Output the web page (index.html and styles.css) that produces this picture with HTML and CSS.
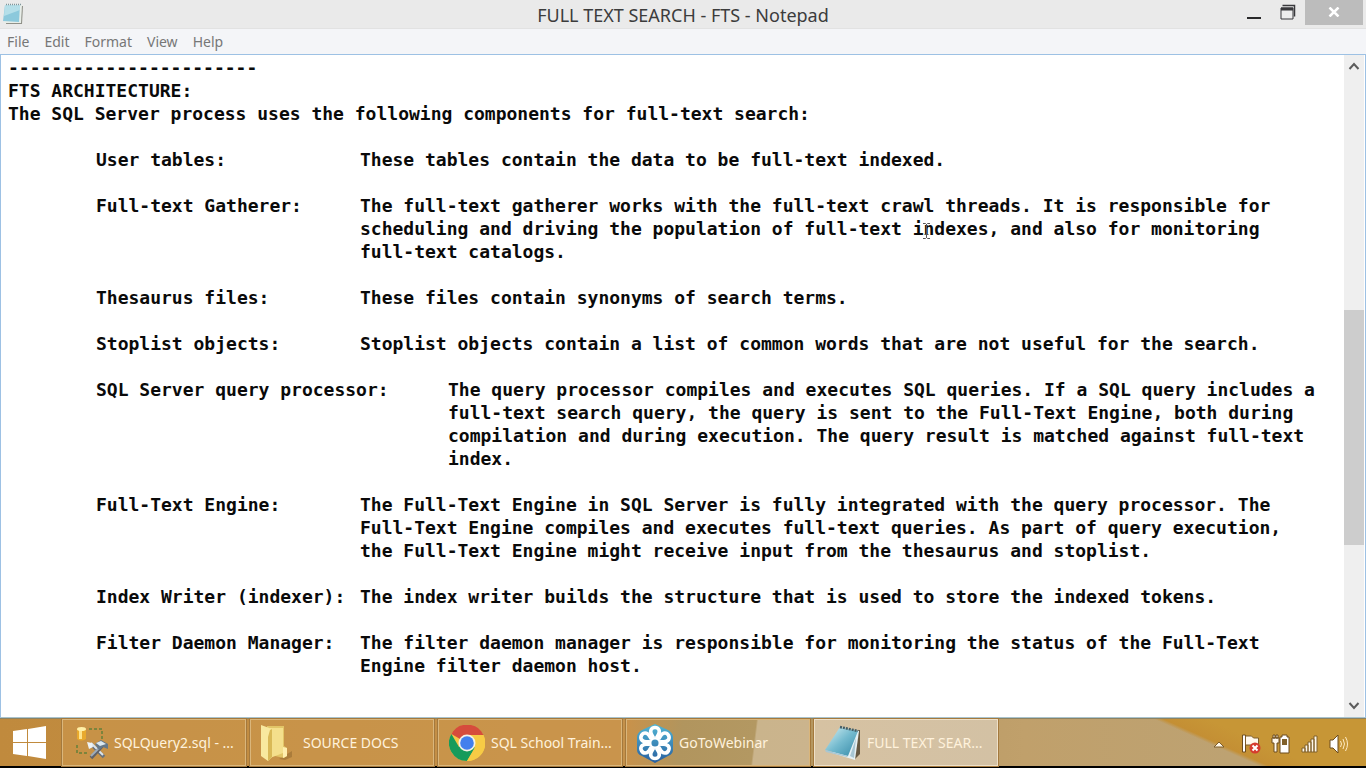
FILE: index.html
```html
<!DOCTYPE html>
<html lang="en">
<head>
<meta charset="utf-8">
<title>FULL TEXT SEARCH - FTS - Notepad</title>
<link rel="stylesheet" href="styles.css">
</head>
<body>
<main class="window">
  <header class="titlebar">
    <svg class="app-icon" viewBox="0 0 22 22" aria-hidden="true">
      <path d="M5 3h16l-1 18H4z" fill="#8f9088"/>
      <path d="M4 2h16l-1 18H2z" fill="#e8eee9"/>
      <path d="M3 2h15l-1 17-16-1z" fill="#8cc9dc"/>
      <path d="M3 2h15v5L2 13z" fill="#b5dfe9"/>
      <path d="M4 1.500h15" stroke="#7f979d" stroke-width="1.500" stroke-dasharray="1 1"/>
    </svg>
    <h1 class="title">FULL TEXT SEARCH - FTS - Notepad</h1>
    <div class="controls">
      <button class="control" type="button" aria-label="Minimize"><svg width="14" height="16" viewBox="0 0 14 16"><path d="M0 14h14" stroke="#29292b" stroke-width="2"/></svg></button>
      <button class="control" type="button" aria-label="Restore"><svg width="16" height="16" viewBox="0 0 16 16" fill="none" stroke="#39393c"><path d="M2.500 1.500h12v11" stroke-width="1.500"/><path d="M1 4h12v11H1z" fill="#eee"/><path d="M1 5h12" stroke-width="3"/></svg></button>
      <button class="control close" type="button" aria-label="Close"><svg width="12" height="10" viewBox="0 0 12 10"><path d="M1.500 0.500l9 9M10.500 0.500l-9 9" stroke="#fff" stroke-width="2.500"/></svg></button>
    </div>
  </header>
  <nav class="menubar" aria-label="Menu">
    <button type="button">File</button>
    <button type="button">Edit</button>
    <button type="button">Format</button>
    <button type="button">View</button>
    <button type="button">Help</button>
  </nav>
  <section class="editor">
    <textarea class="text" aria-label="Document text" spellcheck="false" wrap="off">-----------------------
FTS ARCHITECTURE:
The SQL Server process uses the following components for full-text search:

&#9;User tables:&#9;&#9;These tables contain the data to be full-text indexed.

&#9;Full-text Gatherer:&#9;The full-text gatherer works with the full-text crawl threads. It is responsible for
&#9;&#9;&#9;&#9;scheduling and driving the population of full-text indexes, and also for monitoring
&#9;&#9;&#9;&#9;full-text catalogs.

&#9;Thesaurus files:&#9;These files contain synonyms of search terms.

&#9;Stoplist objects:&#9;Stoplist objects contain a list of common words that are not useful for the search.

&#9;SQL Server query processor:&#9;The query processor compiles and executes SQL queries. If a SQL query includes a
&#9;&#9;&#9;&#9;&#9;full-text search query, the query is sent to the Full-Text Engine, both during
&#9;&#9;&#9;&#9;&#9;compilation and during execution. The query result is matched against full-text
&#9;&#9;&#9;&#9;&#9;index.

&#9;Full-Text Engine:&#9;The Full-Text Engine in SQL Server is fully integrated with the query processor. The
&#9;&#9;&#9;&#9;Full-Text Engine compiles and executes full-text queries. As part of query execution,
&#9;&#9;&#9;&#9;the Full-Text Engine might receive input from the thesaurus and stoplist.

&#9;Index Writer (indexer):&#9;The index writer builds the structure that is used to store the indexed tokens.

&#9;Filter Daemon Manager:&#9;The filter daemon manager is responsible for monitoring the status of the Full-Text
&#9;&#9;&#9;&#9;Engine filter daemon host.</textarea>
    <svg class="pointer" viewBox="0 0 9 18" aria-hidden="true"><path d="M1 1.500h2.500l1 1 1-1H8M1 16.500h2.500l1-1 1 1H8M4.500 2v14M2.500 12.500h4" fill="none" stroke="#555"/></svg>
    <div class="scrollbar">
      <button type="button" aria-label="Scroll up"><svg width="12" height="8" viewBox="0 0 12 8"><path d="M1.500 7L6 2l4.500 5" fill="none" stroke="#5c5c5c" stroke-width="2"/></svg></button>
      <div class="track"><div class="thumb"></div></div>
      <button type="button" aria-label="Scroll down"><svg width="12" height="8" viewBox="0 0 12 8"><path d="M1.500 1L6 6l4.500-5" fill="none" stroke="#5c5c5c" stroke-width="2"/></svg></button>
    </div>
  </section>
</main>
<footer class="taskbar">
  <button class="start" type="button" aria-label="Start">
    <svg width="33" height="33" viewBox="0 0 33 33" fill="#fff"><path d="M0 5l14-2v13H0zM15 3l18-3v16H15zM0 17h14v13L0 28zM15 17h18v16l-18-3z"/></svg>
  </button>
  <div class="tasks">
    <button class="task query" type="button">
      <svg class="task-icon" viewBox="0 0 36 36" aria-hidden="true">
        <path d="M14 4h13v11M2 20v8h11" fill="none" stroke="#64803a" stroke-width="1.500" stroke-dasharray="3 2"/>
        <path d="M2 4h9v10q-5 3-9 0z" fill="#e9a92d"/><path d="M4 5h3v9H4z" fill="#ffe38b"/><ellipse cx="6.500" cy="4" rx="4.500" ry="2" fill="#fff0a7"/>
        <path d="M16 19L29 32" stroke="#68717c" stroke-width="3.500"/><path d="M16 18L28 30" stroke="#dce5ec" stroke-width="2"/>
        <path d="M28 20L16 33" stroke="#5f6168" stroke-width="3.500"/><path d="M27 20L16 31" stroke="#9eacba" stroke-width="2"/>
        <path d="M20 19l6-4 7 4v5l-5-2-4 3z" fill="#657787"/><path d="M21 18l5-2 5 3-6 2z" fill="#dce8ef"/><path d="M12 17l5 1 1 4-4 2z" fill="#edf2f5"/>
      </svg><span>SQLQuery2.sql - ...</span></button>
    <button class="task docs" type="button">
      <svg class="task-icon" viewBox="0 0 36 36" aria-hidden="true">
        <path d="M20 34l13-8v6l-7 3z" fill="#765321" opacity=".35"/>
        <path d="M8 1h17v20l3 2v8l-3 2-18-4z" fill="#e2c568"/>
        <path d="M11 3h13v25l-13 5z" fill="#f4df8c"/>
        <path d="M2 0l11 4v28l-4 4-7-5z" fill="#f8e99f"/><path d="M11 5l2-1v28l-4 4V12z" fill="#d9b957"/>
        <path d="M24 22l4 1v8l-4 2z" fill="#ffeeae"/>
      </svg><span>SOURCE DOCS</span></button>
    <button class="task chrome" type="button">
      <svg class="task-icon" viewBox="0 0 36 36" aria-hidden="true">
        <circle cx="18" cy="18" r="18" fill="#f4c846"/>
        <path d="M18 18L2.400 9A18 18 0 0 1 34.500 10H18z" fill="#d64c3c"/>
        <path d="M2.400 9A18 18 0 0 0 18 36l7.800-13.500L18 18 10 22z" fill="#169b5b"/>
        <path d="M18 10h16.500A18 18 0 0 1 18 36l8-13z" fill="#f7cb45"/>
        <circle cx="18" cy="18" r="8.500" fill="#f4f2e7"/><circle cx="18" cy="18" r="6.800" fill="#427fed"/>
      </svg><span>SQL School Train...</span></button>
    <button class="task webinar" type="button">
      <svg class="task-icon" viewBox="0 0 36 40" aria-hidden="true">
        <defs><linearGradient id="hex" x2="0" y2="1"><stop stop-color="#51b6d5"/><stop offset="1" stop-color="#285f9f"/></linearGradient></defs>
        <path d="M18 1l13 6q5 3 5 7v13q0 4-5 6l-13 7-13-7q-5-2-5-6V14q0-4 5-7z" fill="url(#hex)"/>
        <g fill="none" stroke="#fff" stroke-width="3.600"><g id="petals"><path d="M16.500 15l-2-3.500C12.500 7.500 14.500 4.500 18 4.500s5.500 3 3.500 7l-2 3.500M16.500 25l-2 3.500c-2 4 0 7 3.500 7s5.500-3 3.500-7l-2-3.500"/></g><use href="#petals" transform="rotate(60 18 20)"/><use href="#petals" transform="rotate(120 18 20)"/><circle cx="18" cy="20" r="4.800" stroke-width="2.500"/></g>
      </svg><span>GoToWebinar</span></button>
    <button class="task active" type="button" aria-pressed="true">
      <svg class="task-icon" viewBox="0 0 36 36" aria-hidden="true">
        <defs><linearGradient id="note" x2="1" y2="1"><stop stop-color="#dcf3f5"/><stop offset=".5" stop-color="#75bbcf"/><stop offset="1" stop-color="#3489a7"/></linearGradient></defs>
        <path d="M30 5l5 0v24l-5 5z" fill="#675a43"/>
        <path d="M31 5l3 1-4 29L7 28z" fill="#e6f1f4"/>
        <path d="M15 2l18 4-10 25-23-6z" fill="url(#note)"/>
        <path d="M0 25l23 6-1 1L1 27zM25 31l6-18-2 20z" fill="#a8c7d4"/><path d="M15 2l18 4" stroke="#455e66" stroke-width="2.500" stroke-dasharray="2 1"/>
      </svg><span>FULL TEXT SEAR...</span></button>
  </div>
  <div class="tray">
    <button type="button" aria-label="Show hidden icons"><svg width="12" height="8" viewBox="0 0 12 8"><path d="M1 7l5-5 5 5z" fill="#fff8e8" stroke="#7d5c2b"/></svg></button>
    <button type="button" aria-label="Action Center"><svg width="20" height="22" viewBox="0 0 20 22"><path d="M1.500 2h3v17h-3z" fill="#fff" stroke="#6c4c1e"/><path d="M4.500 3h6l2 2h5v8H11l-1-1H4.500z" fill="#fff8ec" stroke="#7d5c2b"/><circle cx="14" cy="15" r="5.500" fill="#d63c2e"/><path d="M11.500 12.500l5 5m0-5l-5 5" stroke="#fff" stroke-width="2"/></svg></button>
    <button type="button" aria-label="Battery"><svg width="20" height="22" viewBox="0 0 20 22"><path d="M1 5h7v5H6v9H3v-9H1zM2 2h2v3H2zm3 0h2v3H5z" fill="#fff8ec" stroke="#6c4c1e"/><path d="M11 2h5v2h2v16H9V4h2z" fill="#fff" stroke="#6c4c1e"/><path d="M11 6h5v6h-5z" fill="#80602a"/></svg></button>
    <button type="button" aria-label="Network"><svg width="18" height="20" viewBox="0 0 18 20"><path d="M1 14h3v4H1zM4 11h3v7H4zM7 8h3v10H7zM10 5h3v13h-3zM13 2h3v16h-3z" fill="#fff8ec" stroke="#80602a"/></svg></button>
    <button type="button" aria-label="Volume"><svg width="20" height="22" viewBox="0 0 20 22"><path d="M1 7h3l5-5v18l-5-5H1z" fill="#fff" stroke="#6c4c1e"/><path d="M11.500 8q2 3 0 6M14 6q3 5 0 10M16.500 4q4 7 0 14" fill="none" stroke="#ffebc4"/></svg></button>
  </div>
</footer>
</body>
</html>
```
FILE: styles.css
```css
* { box-sizing: border-box; }

body {
  margin: 0;
  height: 100vh;
  display: flex;
  flex-direction: column;
  overflow: hidden;
  background: #fff;
  font-family: "Noto Sans", "Open Sans", sans-serif;
}

button {
  margin: 0;
  padding: 0;
  border: 0;
  background: none;
  font: inherit;
  color: inherit;
}

svg { display: block; flex: none; }

.window {
  flex: 1;
  min-height: 0;
  display: flex;
  flex-direction: column;
}

.titlebar {
  display: grid;
  grid-template-columns: 1fr auto 1fr;
  align-items: start;
  height: 29px;
  background: #eaeaea;
  border-bottom: 1px solid #e2e2e2;
}

.app-icon { width: 22px; height: 22px; margin: 3px 0 0 2px; }

.title {
  margin: 2px 0 0;
  font-size: 18px;
  line-height: 26px;
  font-weight: 400;
  color: #3c3c3c;
  white-space: nowrap;
}

.controls { display: flex; justify-content: flex-end; padding-right: 3px; }

.control {
  width: 34px;
  height: 25px;
  display: flex;
  align-items: center;
  justify-content: center;
  padding-bottom: 2px;
}

.close { width: 58px; background: #bcbcbc; }

.menubar {
  height: 25px;
  display: flex;
  align-items: center;
  gap: 15px;
  padding-left: 7px;
  background: #f4f5f8;
  font-size: 14px;
  line-height: 20px;
  color: #777;
}

.editor {
  position: relative;
  flex: 1;
  min-height: 0;
  display: flex;
  border: 1px solid #9dc1e4;
  border-bottom-color: #a9c3cd;
}

.text {
  flex: 1;
  min-width: 0;
  margin: 0;
  padding: 1px 0 0 7px;
  border: 0;
  outline: 0;
  resize: none;
  overflow: hidden;
  background: #fff;
  color: #0a0a0a;
  font-family: "DejaVu Sans Mono", monospace;
  font-size: 18px;
  line-height: 23px;
  font-weight: 700;
  white-space: pre;
  tab-size: 88px;
}

.pointer { position: absolute; left: 921px; top: 167px; width: 9px; height: 18px; }

.scrollbar {
  width: 20px;
  margin-right: 1px;
  display: flex;
  flex-direction: column;
  background: #efefef;
}

.scrollbar button {
  height: 22px;
  display: flex;
  align-items: center;
  justify-content: center;
}

.track { flex: 1; display: flex; flex-direction: column; }
.track::before { content: ""; flex: 233; }
.track::after { content: ""; flex: 150; }
.thumb { flex: 235; background: #cdcdcd; }

.taskbar {
  height: 50px;
  display: flex;
  align-items: stretch;
  border-top: 1px solid #8b8263;
  border-bottom: 2px solid #000;
  color: #fff2dc;
  font-size: 14px;
  line-height: 20px;
  background:
    linear-gradient(24deg, transparent 33%, #c48f34 36%, #c79636 50%) right / 211px 100% no-repeat,
    linear-gradient(90deg, #c08a3d 0, #c69149 45%, #b2945d 55%, #c0a06b 75%, #bda272 90%);
}

.start {
  width: 62px;
  display: flex;
  align-items: center;
  padding-left: 13px;
}

.tasks {
  flex: 0 1 936px;
  min-width: 0;
  display: grid;
  grid-template-columns: repeat(5, minmax(0, 1fr));
  gap: 4px;
}

.task {
  display: flex;
  align-items: center;
  gap: 6px;
  padding: 0 10px;
  overflow: hidden;
  border: 1px solid #dab67b;
  background: #cc984f88;
  outline: 1px solid #a4793d;
  text-align: left;
  white-space: nowrap;
}

.task span { flex: none; }
.task-icon { width: 36px; height: 36px; }
.query { padding-left: 12px; gap: 3px; }
.docs { padding-left: 8px; gap: 8px; }
.webinar {
  background: linear-gradient(97deg, #c9924a 0, #b1955e 30%, #b39862 69%, #cab48c 70%, #cbb48d 100%);
}
.webinar .task-icon { height: 40px; }
.active {
  border-color: #eee0c8;
  background: linear-gradient(90deg, #d6c2a2, #d3c1a4);
}

.tray {
  margin-left: auto;
  display: flex;
  align-items: center;
  gap: 10px;
  padding: 2px 17px 0 0;
}
.tray button:first-child { margin-right: 6px; }
```
